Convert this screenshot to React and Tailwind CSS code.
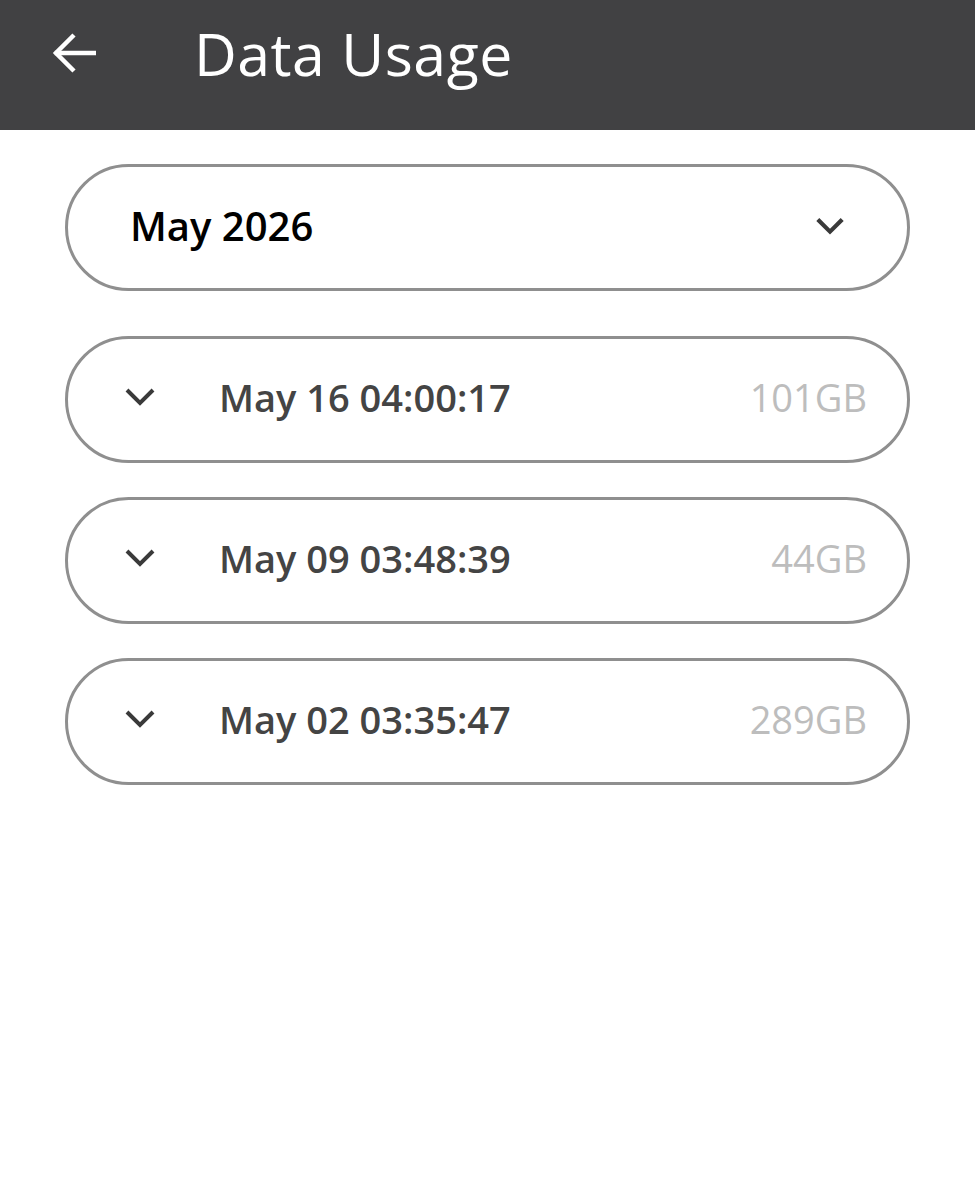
import React from "react";

function Chevron({ className, sw = 4 }) {
  return (
    <svg viewBox="0 0 32 18" className={className} fill="none" stroke="currentColor" strokeWidth={sw} strokeLinecap="butt" strokeLinejoin="miter">
      <path d="M3 2 L16 15 L29 2" />
    </svg>
  );
}

const rows = [
  { date: "May 16 04:00:17", value: "101GB" },
  { date: "May 09 03:48:39", value: "44GB" },
  { date: "May 02 03:35:47", value: "289GB" },
];

export default function App() {
  return (
    <div className="w-[975px] h-[1200px] bg-white" style={{ fontFamily: '"Open Sans", sans-serif' }}>
      <header className="h-[130px] bg-[#414143] flex items-center pb-[24px]">
        <svg viewBox="0 0 44 44" className="ml-[52px] w-[44px] h-[44px] text-white" fill="none" stroke="currentColor" strokeWidth="4.5" strokeLinecap="square">
          <path d="M42 22 H5" />
          <path d="M22 4 L4 22 L22 40" strokeLinecap="butt" />
        </svg>
        <h1 className="ml-[98px] text-white text-[59px] leading-none font-normal tracking-[0.5px]">Data Usage</h1>
      </header>

      <main className="px-[65px] pt-[34px] flex flex-col">
        <div className="h-[127px] rounded-full border-[3px] border-[#8f8f8f] flex items-center justify-between pl-[62px] pr-[62px] pb-[4px]">
          <span className="text-[40px] font-semibold text-black leading-none">May 2026</span>
          <Chevron className="w-[30px] h-[18px] text-[#3a3a3a]" sw={4.5} />
        </div>

        <div className="mt-[45px] flex flex-col gap-[34px]">
          {rows.map((r) => (
            <div key={r.date} className="h-[127px] rounded-full border-[3px] border-[#8f8f8f] flex items-center pl-[56px] pr-[40px] pb-[6px]">
              <Chevron className="w-[32px] h-[18px] text-[#3a3a3a]" />
              <span className="ml-[63px] text-[38px] font-semibold text-[#444444] leading-none flex-1">{r.date}</span>
              <span className="text-[38px] font-normal text-[#bdbdbd] leading-none">{r.value}</span>
            </div>
          ))}
        </div>
      </main>
    </div>
  );
}
